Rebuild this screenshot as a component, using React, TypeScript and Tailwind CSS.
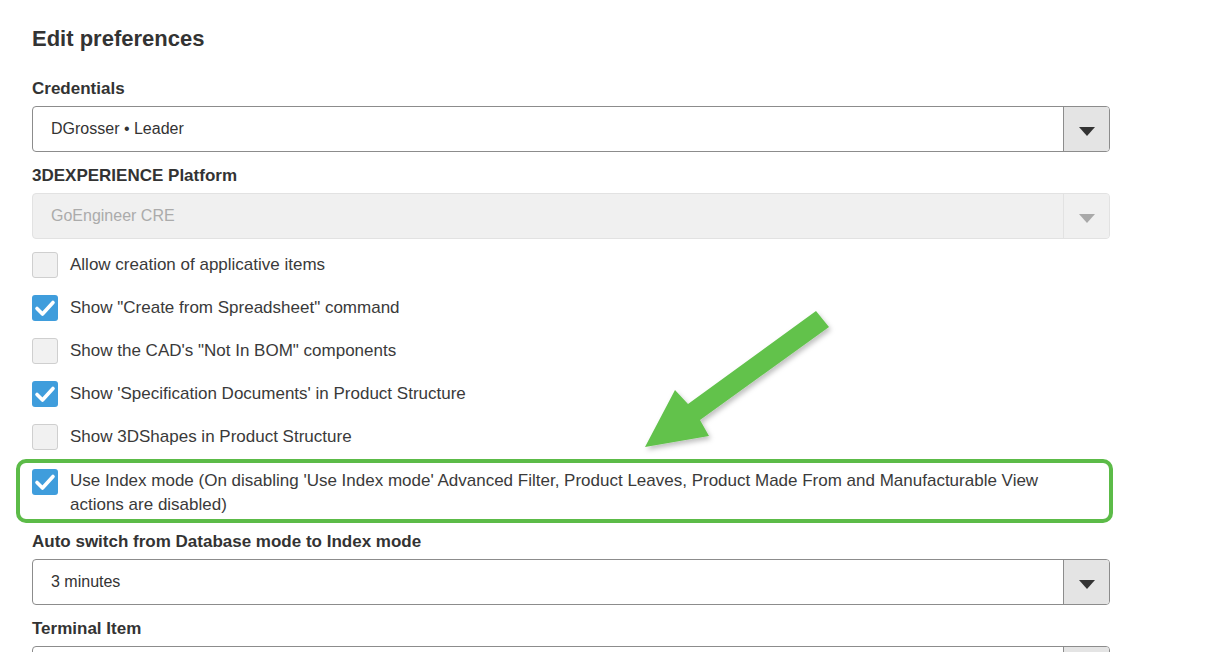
const font = { fontFamily: '"Liberation Sans", Arial, sans-serif' };

function Select({ value, disabled = false }: { value: string; disabled?: boolean }) {
  return (
    <div
      className={`flex h-[46px] w-[1078px] rounded-[4px] border ${
        disabled ? 'border-[#e2e2e2] bg-[#f0f0f0]' : 'border-[#8c8c8c] bg-white'
      }`}
    >
      <div
        className={`flex flex-1 items-center pl-[18px] text-[16px] ${
          disabled ? 'text-[#ababab]' : 'text-[#333]'
        }`}
      >
        {value}
      </div>
      <div
        className={`flex w-[46px] items-center justify-center rounded-r-[3px] border-l pt-[4px] ${
          disabled ? 'border-[#e2e2e2] bg-[#f0f0f0]' : 'border-[#8c8c8c] bg-[#e4e4e4]'
        }`}
      >
        <svg width="16" height="9" viewBox="0 0 16 9">
          <polygon points="0,0 16,0 8,9" fill={disabled ? '#a9a9a9' : '#333'} />
        </svg>
      </div>
    </div>
  );
}

function Checkbox({ checked }: { checked: boolean }) {
  if (checked) {
    return (
      <div className="flex h-[26px] w-[26px] shrink-0 items-center justify-center rounded-[3px] bg-[#3f9ddc]">
        <svg width="26" height="26" viewBox="0 0 26 26">
          <polyline
            points="5,13.5 10.5,19 21,7.5"
            fill="none"
            stroke="#fff"
            strokeWidth="3.6"
            strokeLinecap="round"
            strokeLinejoin="round"
          />
        </svg>
      </div>
    );
  }
  return <div className="h-[26px] w-[26px] shrink-0 rounded-[3px] border border-[#cfcfcf] bg-[#f1f1f1]" />;
}

function Label({ children }: { children: string }) {
  return <div className="h-[20px] text-[17px] font-bold leading-[20px] text-[#333]">{children}</div>;
}

function Option({ checked, text }: { checked: boolean; text: string }) {
  return (
    <div className="flex items-start gap-[12px]">
      <Checkbox checked={checked} />
      <div className="text-[17px] leading-[26px] text-[#3a3a3a]">{text}</div>
    </div>
  );
}

export default function App() {
  return (
    <div className="relative h-[652px] w-[1207px] overflow-hidden bg-white" style={font}>
      <div className="flex flex-col pl-[32px] pt-[25px]">
        <h1 className="h-[28px] text-[22px] font-bold leading-[28px] text-[#333]">Edit preferences</h1>

        <div className="mt-[26px]">
          <Label>Credentials</Label>
        </div>
        <div className="mt-[7px]">
          <Select value="DGrosser • Leader" />
        </div>

        <div className="mt-[14px]">
          <Label>3DEXPERIENCE Platform</Label>
        </div>
        <div className="mt-[7px]">
          <Select value="GoEngineer CRE" disabled />
        </div>

        <div className="mt-[13px] flex flex-col gap-[17px]">
          <Option checked={false} text="Allow creation of applicative items" />
          <Option checked text={'Show "Create from Spreadsheet" command'} />
          <Option checked={false} text={'Show the CAD\'s "Not In BOM" components'} />
          <Option checked text="Show 'Specification Documents' in Product Structure" />
          <Option checked={false} text="Show 3DShapes in Product Structure" />

          <div className="relative mt-[2px] w-[1078px]">
            <div className="pointer-events-none absolute -left-[16px] -right-[3px] -top-[10px] -bottom-[6px] rounded-[10px] border-4 border-[#5cbb48]" />
            <div className="flex items-start gap-[12px]">
              <Checkbox checked />
              <div className="max-w-[1000px] text-[17px] leading-[24px] text-[#3a3a3a]">
                Use Index mode (On disabling 'Use Index mode' Advanced Filter, Product Leaves, Product Made From and
                Manufacturable View actions are disabled)
              </div>
            </div>
          </div>
        </div>

        <div className="mt-[15px]">
          <Label>Auto switch from Database mode to Index mode</Label>
        </div>
        <div className="mt-[7px]">
          <Select value="3 minutes" />
        </div>

        <div className="mt-[14px]">
          <Label>Terminal Item</Label>
        </div>
        <div className="mt-[7px]">
          <Select value="" />
        </div>
      </div>

      {/* annotation arrow */}
      <svg className="pointer-events-none absolute left-0 top-0" width="1207" height="652" viewBox="0 0 1207 652">
        <defs>
          <filter id="arrowShadow" x="-20%" y="-20%" width="140%" height="140%">
            <feDropShadow dx="2" dy="3" stdDeviation="2.5" floodColor="#000" floodOpacity="0.25" />
          </filter>
        </defs>
        <polygon
          points="816,311 829,327 700,420 709,436 645,447 675,390 688,404"
          fill="#62c24c"
          filter="url(#arrowShadow)"
        />
      </svg>
    </div>
  );
}
